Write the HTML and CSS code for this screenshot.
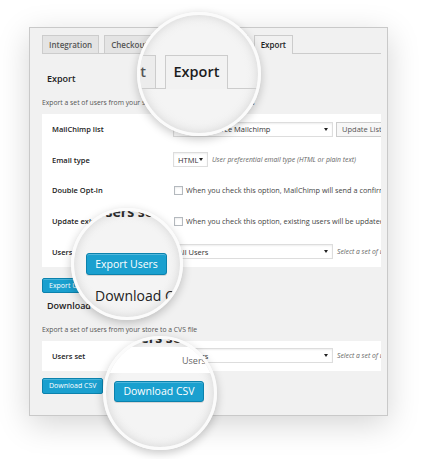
FILE: index.html
```html
<!DOCTYPE html>
<html>
<head>
<meta charset="utf-8">
<link rel="stylesheet" href="styles.css">
</head>
<body>
<div class="stage">
  <div class="panel">
    <div class="content">
      <nav class="tabs">
        <span class="tab">Integration</span>
        <span class="tab">Checkout</span>
        <span class="tab tab-wide">Widget &amp; Shortcode</span>
        <span class="tab active">Export</span>
      </nav>

      <h3 class="heading first">Export</h3>
      <p class="desc">Export a set of users from your store to one of your MailChimp lists</p>

      <div class="table">
        <div class="row">
          <div class="label">MailChimp list</div>
          <div class="field">
            <div class="select wide"><span>WooCommerce Mailchimp</span><i class="caret"></i></div>
            <span class="btn-secondary">Update Lists</span>
          </div>
        </div>
        <div class="row">
          <div class="label">Email type</div>
          <div class="field">
            <div class="select narrow"><span>HTML</span><i class="caret"></i></div>
            <span class="hint">User preferential email type (HTML or plain text)</span>
          </div>
        </div>
        <div class="row">
          <div class="label">Double Opt-in</div>
          <div class="field">
            <span class="check"></span>
            <span class="check-text">When you check this option, MailChimp will send a confirmation email</span>
          </div>
        </div>
        <div class="row">
          <div class="label">Update existing users</div>
          <div class="field">
            <span class="check"></span>
            <span class="check-text">When you check this option, existing users will be updated</span>
          </div>
        </div>
        <div class="row">
          <div class="label">Users set</div>
          <div class="field">
            <div class="select wide"><span>All Users</span><i class="caret"></i></div>
            <span class="hint">Select a set of users to export</span>
          </div>
        </div>
      </div>

      <span class="btn-primary btn-export">Export Users</span>

      <h3 class="heading second">Download CSV</h3>
      <p class="desc">Export a set of users from your store to a CVS file</p>

      <div class="table">
        <div class="row row-single">
          <div class="label">Users set</div>
          <div class="field">
            <div class="select wide"><span>All Users</span><i class="caret"></i></div>
            <span class="hint">Select a set of users to export</span>
          </div>
        </div>
      </div>

      <span class="btn-primary btn-download">Download CSV</span>
    </div>
  </div>
</div>

<div class="lens lens-tabs">
  <div class="lens-line"></div>
  <div class="lens-tab lens-tab-prev">Checkout</div>
  <div class="lens-tab lens-tab-active">Export</div>
</div>

<div class="lens lens-export">
  <div class="lens-label">Users set</div>
  <div class="lens-btn lens-btn-export">Export Users</div>
  <div class="lens-heading">Download CSV</div>
</div>

<div class="lens lens-download">
  <div class="lens-band"><span>Users</span></div>
  <div class="lens-label">Users set</div>
  <div class="lens-btn lens-btn-download">Download CSV</div>
</div>
</body>
</html>
```

FILE: styles.css
```css
* { box-sizing: border-box; }
html, body { margin: 0; padding: 0; background: #fff; }
body {
  font-family: "Open Sans", "DejaVu Sans", sans-serif;
  width: 421px;
  height: 459px;
  overflow: hidden;
  position: relative;
  color: #222;
}

.stage { padding: 27px 0 0 29px; }

.panel {
  width: 359px;
  height: 389px;
  background: #f1f1f1;
  border: 1px solid #c9c9c9;
  box-shadow: 0 8px 30px rgba(0, 0, 0, 0.17);
  padding: 7px 6px 0 12px;
}

.content {
  width: 339px;
  overflow: hidden;
}

/* tabs */
.tabs {
  display: flex;
  align-items: flex-start;
  gap: 5px;
  height: 19px;
  border-bottom: 1px solid #cccccc;
}
.tab {
  height: 18px;
  padding: 0 6px;
  border: 1px solid #cccccc;
  border-bottom: none;
  background: #e4e4e4;
  font-size: 8px;
  font-weight: 600;
  line-height: 17px;
  color: #555;
  white-space: nowrap;
}
.tab-wide { width: 88px; }
.tab.active {
  height: 19px;
  background: #f1f1f1;
  color: #222;
  margin-left: 1px;
}

/* headings and descriptions */
.heading {
  margin: 0;
  padding-left: 5px;
  font-size: 9px;
  font-weight: 600;
  line-height: 12px;
  color: #222;
}
.heading.first { margin-top: 19px; }
.heading.second { margin-top: 7px; }

.desc {
  margin: 13px 0 0;
  font-size: 6.8px;
  line-height: 10px;
  color: #555;
  white-space: nowrap;
}

/* form table */
.table {
  background: #fff;
  margin-top: 6px;
}
.row {
  display: flex;
  align-items: center;
  height: 30.6px;
}
.row-single { height: 30px; }
.label {
  width: 131px;
  flex: none;
  padding-left: 10px;
  font-size: 7.5px;
  font-weight: 600;
  color: #222;
  white-space: nowrap;
}
.field {
  display: flex;
  align-items: center;
  white-space: nowrap;
}
.select {
  display: flex;
  align-items: center;
  justify-content: space-between;
  height: 15px;
  padding: 0 4px;
  background: #fff;
  border: 1px solid #dddddd;
  box-shadow: inset 0 1px 2px rgba(0, 0, 0, 0.07);
  font-size: 7.5px;
  color: #333;
  flex: none;
}
.select.wide { width: 160px; }
.select.narrow { width: 35px; }
.caret {
  width: 0;
  height: 0;
  border-left: 2px solid transparent;
  border-right: 2px solid transparent;
  border-top: 3px solid #222;
}
.btn-secondary {
  margin-left: 3px;
  height: 15px;
  padding: 0 5px;
  border: 1px solid #cccccc;
  background: #f7f7f7;
  font-size: 7.5px;
  line-height: 13px;
  color: #555;
}
.hint {
  margin-left: 4px;
  font-size: 6.8px;
  font-style: italic;
  color: #666;
}
.check {
  width: 9px;
  height: 9px;
  margin-left: 1px;
  border: 1px solid #b4b9be;
  background: #fff;
  box-shadow: inset 0 1px 2px rgba(0, 0, 0, 0.08);
  flex: none;
}
.check-text {
  margin-left: 3px;
  font-size: 7.3px;
  color: #444;
}

/* primary buttons */
.btn-primary {
  display: block;
  width: max-content;
  height: 15px;
  padding: 0 6px;
  background: #1aa0cf;
  border: 1px solid #0b82ad;
  border-radius: 2px;
  box-shadow: inset 0 1px 0 rgba(120, 200, 230, 0.5);
  font-size: 7px;
  line-height: 13px;
  color: #fff;
}
.btn-export { margin-top: 11px; }
.btn-download { margin-top: 7px; height: 16px; line-height: 14px; }

/* magnifier lenses */
.lens {
  position: absolute;
  border-radius: 50%;
  border: 3px solid #fbfbfb;
  background: radial-gradient(circle at 50% 50%, #f4f4f4 55%, #e9e9e9 100%);
  box-shadow: 0 3px 10px rgba(0, 0, 0, 0.22), inset 0 0 10px rgba(0, 0, 0, 0.1);
  overflow: hidden;
}
.lens-tabs { left: 137px; top: 12px; width: 124px; height: 124px; }
.lens-export { left: 71px; top: 208px; width: 112px; height: 112px; }
.lens-download { left: 103px; top: 336px; width: 114px; height: 114px; }

.lens-line {
  position: absolute;
  left: 0;
  right: 0;
  top: 73px;
  height: 1px;
  background: #cccccc;
}
.lens-tab {
  position: absolute;
  top: 40px;
  height: 33px;
  border: 1px solid #cccccc;
  border-bottom: none;
  font-size: 14.5px;
  font-weight: 600;
  line-height: 31px;
  white-space: nowrap;
}
.lens-tab-prev {
  left: -70px;
  width: 86px;
  text-align: right;
  padding-right: 9px;
  color: #555;
  background: #ececec;
}
.lens-tab-active {
  left: 25px;
  width: 63px;
  height: 34px;
  text-align: center;
  color: #1d1d1d;
  background: #f2f2f2;
}

.lens-label {
  position: absolute;
  top: -6px;
  left: 21px;
  font-size: 14px;
  font-weight: 700;
  line-height: 14px;
  color: #2a2a2a;
  white-space: nowrap;
}
.lens-download .lens-label { top: -8px; left: 17px; }

.lens-btn {
  position: absolute;
  top: 42px;
  height: 22px;
  background: #1aa0cf;
  border: 1px solid #0b82ad;
  border-radius: 3px;
  box-shadow: inset 0 1px 0 rgba(120, 200, 230, 0.6), 0 1px 0 rgba(0, 0, 0, 0.12);
  font-size: 10.5px;
  line-height: 20px;
  text-align: center;
  color: #fff;
  white-space: nowrap;
}
.lens-btn-export { left: 12px; width: 81px; }
.lens-btn-download { left: 8px; width: 90px; height: 21px; line-height: 19px; }

.lens-heading {
  position: absolute;
  top: 76px;
  left: 21px;
  font-size: 14px;
  line-height: 18px;
  color: #222;
  white-space: nowrap;
}

.lens-band {
  position: absolute;
  left: 0;
  right: 0;
  top: 8px;
  height: 26px;
  background: #fff;
}
.lens-band span {
  position: absolute;
  left: 76px;
  top: 8px;
  font-size: 9px;
  line-height: 12px;
  color: #666;
  white-space: nowrap;
}
```
